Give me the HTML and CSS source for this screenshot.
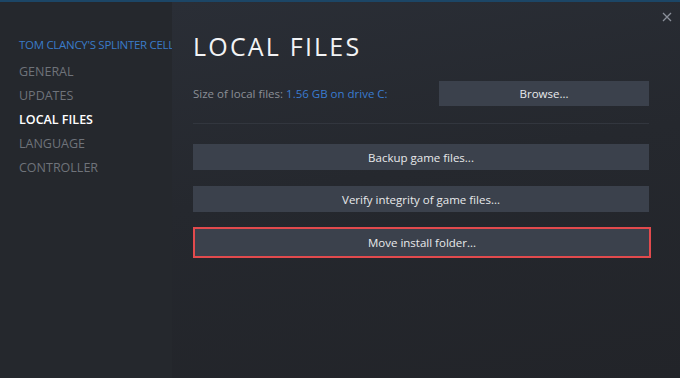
FILE: index.html
```html
<!DOCTYPE html>
<html>
<head>
    <meta charset="UTF-8">
    <title>Local Files</title>
    <link rel="stylesheet" href="styles.css">
</head>
<body>
    <div class="window">
        <div class="sidebar">
            <div class="game-title">TOM CLANCY'S SPLINTER CELL</div>
            <div class="nav-item">GENERAL</div>
            <div class="nav-item">UPDATES</div>
            <div class="nav-item active">LOCAL FILES</div>
            <div class="nav-item">LANGUAGE</div>
            <div class="nav-item">CONTROLLER</div>
        </div>
        <div class="main">
            <div class="close">
                <svg width="10" height="10" viewBox="0 0 10 10"><path d="M1 1L9 9M9 1L1 9" stroke="#8a8f99" stroke-width="1.3"/></svg>
            </div>
            <h1>LOCAL FILES</h1>
            <div class="size-row">
                <div class="size-text">Size of local files: <span class="size-value">1.56 GB on drive C:</span></div>
                <button class="btn browse">Browse...</button>
            </div>
            <div class="divider"></div>
            <div class="actions">
                <button class="btn">Backup game files...</button>
                <button class="btn">Verify integrity of game files...</button>
                <button class="btn highlighted">Move install folder...</button>
            </div>
        </div>
    </div>
</body>
</html>
```
FILE: styles.css
```css
body { margin: 0; background: #24272c; font-family: "Open Sans", "Noto Sans", sans-serif; }
.window {
    display: flex;
    height: 378px;
    border-top: 2px solid #1c4666;
    box-sizing: border-box;
}
.sidebar {
    width: 172px;
    background: #25282d;
    padding: 35px 0 0 19px;
    box-sizing: border-box;
}
.game-title {
    color: #3a7bc8;
    font-size: 11.5px;
    letter-spacing: -0.3px;
    white-space: nowrap;
    margin-bottom: 8px;
}
.nav-item {
    color: #6f737a;
    font-size: 12.5px;
    height: 24px;
    line-height: 24px;
}
.nav-item.active { color: #ffffff; font-weight: 600; }
.main {
    flex: 1;
    position: relative;
    background: linear-gradient(170deg, #2a2e36 0%, #25282e 45%, #222429 100%);
    padding: 0 31px 0 21px;
}
.close {
    position: absolute;
    top: 3px;
    right: 8px;
}
h1 {
    margin: 28px 0 0;
    font-size: 25px;
    font-weight: 400;
    letter-spacing: 2.2px;
    color: #f2f3f5;
    line-height: 32px;
}
.size-row {
    display: flex;
    align-items: center;
    justify-content: space-between;
    margin-top: 19px;
}
.size-text { color: #8b8f96; font-size: 11.5px; }
.size-value { color: #3a7bd0; }
.btn {
    display: block;
    background: #3b414c;
    border: none;
    color: #e8e9eb;
    font-family: "Open Sans", "Noto Sans", sans-serif;
    font-size: 11.5px;
    height: 25px;
    padding: 0;
    width: 100%;
    text-align: center;
}
.browse { width: 210px; height: 25px; }
.divider {
    height: 1px;
    background: #32363e;
    margin-top: 17px;
}
.actions {
    display: flex;
    flex-direction: column;
    gap: 16px;
    margin-top: 20px;
}
.actions .btn { height: 26px; }
.actions .btn.highlighted {
    box-sizing: border-box;
    border: 2px solid #e24a4d;
    height: 31px;
    width: calc(100% + 2px);
    margin-top: -1px;
}
```
